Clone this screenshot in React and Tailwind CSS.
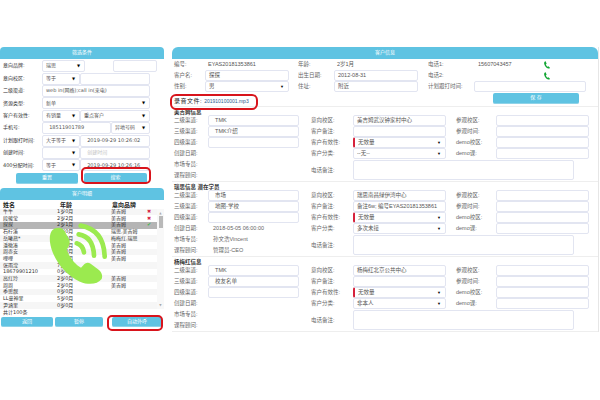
import React from "react";

const font = { fontFamily: '"DejaVu Sans","Noto Sans CJK SC",sans-serif' };
const rightFont = { fontFamily: '"Liberation Sans","Noto Sans CJK SC",sans-serif' };

/* ---------- small form parts ---------- */

function Field({ w, children, muted, red, h = "h-[12px]" }) {
  return (
    <div
      className={`${w} ${h} shrink-0 flex items-center px-[3px] bg-white border border-[#e2e5f1] rounded-[2px] whitespace-nowrap overflow-hidden ${muted ? "text-[#c4c4c4]" : "text-[#555]"} ${red ? "border-l-2 border-l-[#d6223c]" : ""}`}
    >
      {children}
    </div>
  );
}

function Select({ w, children, red, h }) {
  return (
    <Field w={w} red={red} h={h}>
      <span className="flex-1 overflow-hidden">{children}</span>
      <span className="text-[4px] text-black pr-[1px]">▼</span>
    </Field>
  );
}

function Btn({ w, children, h = "h-[11px]" }) {
  return (
    <div className={`${w} ${h} shrink-0 flex items-center justify-center rounded-[2px] bg-[#5fc3e2] text-white text-[5px] border-b border-[#8fd3e8]`}>
      {children}
    </div>
  );
}

function PanelHead({ children, round = "rounded-t-[4px]" }) {
  return (
    <div className={`h-[12px] bg-[#5fc3e2] ${round} flex items-center justify-center text-white text-[5px]`}>
      {children}
    </div>
  );
}

function FilterRow({ label, children }) {
  return (
    <div className="h-[12.4px] flex items-center">
      <span className="w-[42px] shrink-0 pl-[3px] text-[5px] text-[#333] whitespace-nowrap">{label}</span>
      {children}
    </div>
  );
}

/* ---------- left side ---------- */

function Filters() {
  return (
    <div className="relative">
      <PanelHead>筛选条件</PanelHead>
      <div className="pt-[1px] text-[5px]">
        <FilterRow label="意向品牌:">
          <Select w="w-[43px]">瑞思</Select>
          <div className="w-[28px]" />
          <Field w="w-[44px]" />
        </FilterRow>
        <FilterRow label="意向校区:">
          <Select w="w-[38px]">等于</Select>
          <Field w="w-[70px]" />
        </FilterRow>
        <FilterRow label="二级渠道:">
          <Field w="w-[108px]">web in(网络);call in(来电)</Field>
        </FilterRow>
        <FilterRow label="资源类型:">
          <Select w="w-[108px]">新单</Select>
        </FilterRow>
        <FilterRow label="客户有效性:">
          <Select w="w-[38px]">有销量</Select>
          <Select w="w-[70px]">重点客户</Select>
        </FilterRow>
        <FilterRow label="手机号:">
          <Field w="w-[69px]">&nbsp;&nbsp;18511901789</Field>
          <Select w="w-[39px]">异地号码</Select>
        </FilterRow>
        <FilterRow label="计划跟打时间:">
          <Select w="w-[38px]">大于等于</Select>
          <Field w="w-[70px]">&nbsp;&nbsp;2019-09-29 10:26:02</Field>
        </FilterRow>
        <FilterRow label="创建时间:">
          <Select w="w-[38px]"></Select>
          <Field w="w-[70px]" muted>&nbsp;&nbsp;创建时间</Field>
        </FilterRow>
        <FilterRow label="400分配时间:">
          <Select w="w-[38px]">等于</Select>
          <Field w="w-[70px]">&nbsp;&nbsp;2019-09-29 10:26:16</Field>
        </FilterRow>
      </div>
      <div className="flex pl-[16px] gap-[6px] mt-[1px]">
        <Btn w="w-[62px]">重置</Btn>
        <Btn w="w-[63px]">搜索</Btn>
      </div>
      <div className="absolute left-[81px] top-[120px] w-[70px] h-[17px] border-2 border-[#d8141c] rounded-[5px]" />
    </div>
  );
}

const customers = [
  ["牛牛", "1岁0月", "美吉姆", "x"],
  ["段骏莹", "2岁2月", "美吉姆", "x"],
  ["探探", "2岁1月", "美吉姆", "ok"],
  ["石柠溪", "2岁0月", "瑞思,美吉姆"],
  ["岳曦燕*", "1岁0月", "梅梅红,瑞思"],
  ["潘徽凑", "2岁0月", "美吉姆"],
  ["周赤安", "2岁0月", "美吉姆"],
  ["哩哩", "1岁0月", "美吉姆"],
  ["张雨滢", "7岁"],
  ["18679901210", "0岁0月"],
  ["高红玲", "2岁0月", "美吉姆"],
  ["周周", "2岁0月", "美吉姆"],
  ["季思靓", "0岁0月"],
  ["LL童神里", "5岁0月"],
  ["尹涵里", "0岁0月"],
];

function CustomerList() {
  return (
    <div className="relative mt-[4px]">
      <PanelHead>客户明细</PanelHead>
      <div className="flex h-[8px] items-center text-[6px] font-bold text-[#222] mt-[1px]">
        <span className="w-[60px] pl-[3px]">姓名</span>
        <span className="w-[52px]">年龄</span>
        <span>意向品牌</span>
      </div>
      <div className="flex">
        <div className="flex-1 min-w-0">
          {customers.map((c, i) => (
            <div
              key={c[0]}
              className={`flex items-center h-[6.7px] text-[5px] text-[#333] whitespace-nowrap ${c[3] === "ok" ? "bg-[#b5b5b5]" : i % 2 ? "bg-white" : "bg-[#f6f6f6]"}`}
            >
              <span className="w-[57px] pl-[3px]">{c[0]}</span>
              <span className="w-[54px]">{c[1]}</span>
              <span className="w-[36px]">{c[2]}</span>
              {c[3] === "x" && <span className="text-[5px] text-[#d6223c]">✖</span>}
              {c[3] === "ok" && <span className="text-[5px] text-[#3cb44a]">✔</span>}
            </div>
          ))}
        </div>
        <div className="w-[7px] shrink-0 flex flex-col items-center bg-[#f8f8f8]">
          <span className="text-[3px] text-[#aaa] mt-[2px]">▲</span>
          <div className="w-[4px] h-[12px] bg-[#b9b9b9] mt-[1px]" />
          <div className="flex-1" />
          <span className="text-[3px] text-[#aaa] mb-[1px]">▼</span>
        </div>
      </div>
      <div className="h-[7px] pl-[3px] text-[5px] leading-[7px] text-[#333]">共计100条</div>
      <div className="flex gap-[2px] mt-[1.5px] pl-[1px]">
        <Btn w="w-[52px]" h="h-[10px]">返回</Btn>
        <Btn w="w-[48px]" h="h-[10px]">暂停</Btn>
        <div className="w-[5px]" />
        <Btn w="w-[50px]" h="h-[10px]">自动外呼</Btn>
      </div>
      <div className="absolute left-[107px] top-[127px] w-[56px] h-[16px] border-2 border-[#d8141c] rounded-[5px]" />
    </div>
  );
}

function BigPhone() {
  return (
    <svg viewBox="0 0 270 270" className="absolute left-[30px] top-[215px] w-[90px] h-[90px]" fill="none">
      <path
        d="M76 40C62 45 58 60 60 82C65 125 103 180 150 200C176 211 203 208 215 192C219 181 214 170 207 165L182 146C173 141 165 144 160 151L153 158C134 148 118 125 110 105L116 94C120 86 120 78 117 72L103 47C97 38 86 36 76 40Z"
        fill="#9bea4f"
      />
      <g stroke="#9bea4f" strokeWidth="14" strokeLinecap="round">
        <path d="M140 85Q158 90 162 112" />
        <path d="M146 58Q190 65 192 122" />
        <path d="M152 32Q222 45 224 125" />
      </g>
    </svg>
  );
}

/* ---------- right side ---------- */

function PhoneIcon() {
  return (
    <svg viewBox="0 0 24 24" className="w-[8px] h-[8px]" fill="#12a533">
      <path d="M8 1C4 2 3 5 3.5 8c1 6 6.5 13 12.5 14.5 2.5.5 4-.5 5-2.5l-5-4-2.5 1.5c-2.500-1.500-4.500-5-5-7.500L11 9z" />
    </svg>
  );
}

function Label({ w, children }) {
  return <span className={`${w} shrink-0 text-[#666] whitespace-nowrap`}>{children}</span>;
}

function TopInfo() {
  const h = "h-[10.5px]";
  return (
    <div className="relative h-[48px] text-[5.5px] border-b border-[#eee]">
      <div className="flex items-center h-[11px] pl-[2px]">
        <Label w="w-[31px]">编号:</Label>
        <span className="w-[93px] pl-[3px] text-[#555]">EYAS20181353861</span>
        <Label w="w-[36px]">年龄:</Label>
        <span className="w-[94px] pl-[3px] text-[#555]">2岁1月</span>
        <Label w="w-[46px]">电话1:</Label>
        <span className="w-[69px] pl-[4px] text-[#555]">15607043457</span>
        <PhoneIcon />
      </div>
      <div className="flex items-center h-[11px] pl-[2px]">
        <Label w="w-[31px]">客户名:</Label>
        <Field w="w-[84px]" h={h}>探探</Field>
        <div className="w-[9px]" />
        <Label w="w-[36px]">出生日期:</Label>
        <Field w="w-[84px]" h={h}>2012-08-31</Field>
        <div className="w-[10px]" />
        <Label w="w-[46px]">电话2:</Label>
        <span className="w-[69px]" />
        <PhoneIcon />
      </div>
      <div className="flex items-center h-[11px] pl-[2px]">
        <Label w="w-[31px]">性别:</Label>
        <Select w="w-[84px]" h={h}>男</Select>
        <div className="w-[9px]" />
        <Label w="w-[36px]">住址:</Label>
        <Field w="w-[84px]" h={h}>附近</Field>
        <div className="w-[10px]" />
        <Label w="w-[46px]">计划跟打时间:</Label>
        <Field w="w-[112px]" h={h} />
      </div>
      <div className="flex h-[15px] pl-[2px]">
        <div className="self-end mb-[1px] flex items-center">
          <span className="text-[6px] text-[#222] tracking-[0.5px]">录音文件:</span>
          <span className="ml-[2px] text-[#2c5b8f] text-[5px]">201910100001.mp3</span>
        </div>
        <div className="flex-1" />
        <div className="self-start mt-[1px] mr-[19px]">
          <Btn w="w-[86px]">保 存</Btn>
        </div>
      </div>
      <div className="absolute left-[-2px] top-[35px] w-[88px] h-[16px] border-2 border-[#d8141c] rounded-[6px]" />
    </div>
  );
}

function Row({ label, lw, children }) {
  return (
    <div className="flex items-center h-[11px]">
      <Label w={lw}>{label}</Label>
      {children}
    </div>
  );
}

function BrandSection({ title, ch2, ch3, created, market, advisor, school, note, kind }) {
  const inputH = "h-[11px]";
  return (
    <div className="border-b border-[#eee] text-[5.5px] pl-[2px]">
      <div className="h-[8px] text-[5.5px] font-bold text-[#333] leading-[10px]">{title}</div>
      <div className="flex">
        <div className="w-[137px] shrink-0">
          <Row label="二级渠道:" lw="w-[34px]"><Field w="w-[91px]" h={inputH}>&nbsp;&nbsp;{ch2}</Field></Row>
          <Row label="三级渠道:" lw="w-[34px]"><Field w="w-[91px]" h={inputH}>&nbsp;&nbsp;{ch3}</Field></Row>
          <Row label="四级渠道:" lw="w-[34px]"><Field w="w-[91px]" h={inputH} /></Row>
          <Row label="创建日期:" lw="w-[39px]"><span className="text-[#666]">{created}</span></Row>
          <Row label="市场专员:" lw="w-[39px]"><span className="text-[#666]">{market}</span></Row>
          <Row label="课程顾问:" lw="w-[39px]"><span className="text-[#666]">{advisor}</span></Row>
        </div>
        <div className="flex-1 min-w-0">
          <div className="flex">
            <div className="w-[145px] shrink-0">
              <Row label="意向校区:" lw="w-[42px]"><Field w="w-[93px]" h={inputH}>{school}</Field></Row>
              <Row label="客户备注:" lw="w-[42px]"><Field w="w-[93px]" h={inputH}>{note}</Field></Row>
              <Row label="客户有效性:" lw="w-[42px]"><Select w="w-[93px]" h={inputH} red>无效量</Select></Row>
              <Row label="客户分类:" lw="w-[42px]"><Select w="w-[93px]" h={inputH}>{kind}</Select></Row>
            </div>
            <div>
              <Row label="参观校区:" lw="w-[40px]"><Field w="w-[93px]" h={inputH} /></Row>
              <Row label="参观时间:" lw="w-[40px]"><Field w="w-[93px]" h={inputH} /></Row>
              <Row label="demo校区:" lw="w-[40px]"><Field w="w-[93px]" h={inputH} /></Row>
              <Row label="demo课:" lw="w-[40px]"><Field w="w-[93px]" h={inputH} /></Row>
            </div>
          </div>
          <div className="flex items-center h-[22px]">
            <Label w="w-[42px]">电话备注:</Label>
            <Field w="w-[221px]" h="h-[20px]" />
          </div>
        </div>
      </div>
    </div>
  );
}

function CustomerInfo() {
  return (
    <div className="w-[427px] shrink-0 border-r border-[#e6e6e6] h-[285px]" style={rightFont}>
      <PanelHead round="rounded-t-[6px]">客户信息</PanelHead>
      <TopInfo />
      <BrandSection title="美吉姆信息" ch2="TMK" ch3="TMK介绍" school="美吉姆武汉钟家村中心" kind="--无--" />
      <BrandSection
        title="瑞思信息 潜在学员"
        ch2="市场"
        ch3="地图-学校"
        created="2018-05-05 06:00:00"
        market="孙文浩Vincent"
        advisor="管理员-CEO"
        school="瑞思南昌绿伊湾中心"
        note="备注6w; 编号EYAS20181353861"
        kind="多次未接"
      />
      <BrandSection title="杨梅红信息" ch2="TMK" ch3="校友名单" school="杨梅红北京公共中心" kind="非本人" />
    </div>
  );
}

export default function App() {
  return (
    <div className="relative w-[600px] h-[400px] bg-white overflow-hidden" style={font}>
      <div className="flex pt-[47px] gap-[8px]">
        <div className="w-[164px] shrink-0">
          <Filters />
          <CustomerList />
        </div>
        <CustomerInfo />
      </div>
      <BigPhone />
    </div>
  );
}
